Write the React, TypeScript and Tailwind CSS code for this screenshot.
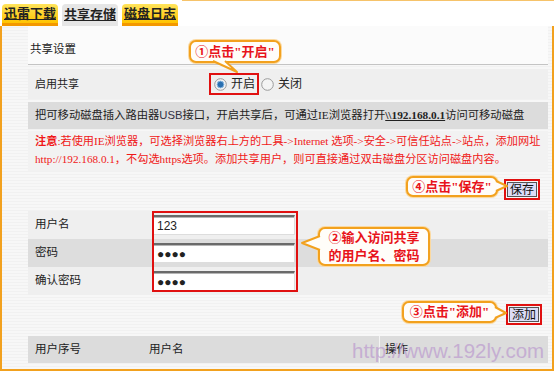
import type { ReactNode } from 'react';

// Router "共享存储" page with tutorial callouts drawn on top

const ORANGE = '#f2a11e';

function Tab({ label, active }: { label: string; active?: boolean }) {
  return (
    <div
      className={
        'flex h-[22px] w-[56px] items-center justify-center rounded-t-[4px] text-[13px] font-bold underline ' +
        (active
          ? 'bg-[#e6e6e6] text-[#222]'
          : 'border-b-[3px] border-[#f39800] bg-[linear-gradient(#ffe45c,#ffc400)] text-[#222]')
      }
    >
      {label}
    </div>
  );
}

function Radio({ checked }: { checked?: boolean }) {
  return (
    <svg width="13" height="13" viewBox="0 0 13 13" className="shrink-0">
      <circle cx="6.5" cy="6.5" r="5.8" fill="#f4f4f4" stroke="#9a9a9a" strokeWidth="1" />
      {checked && <circle cx="6.5" cy="6.5" r="3.4" fill="#2a6fb0" stroke="#8bb8e0" strokeWidth="1" />}
    </svg>
  );
}

function Callout({
  className,
  children,
}: {
  className: string;
  children: ReactNode;
}) {
  return (
    <div
      className={
        'absolute flex items-center justify-center rounded-[7px] border-2 border-[#f2a11e] bg-[#fffdf9] text-[13px] font-bold leading-[18px] text-[#e8141b] shadow-[0_0_0_1px_#fbd9a0] ' +
        className
      }
    >
      {children}
    </div>
  );
}

function Tail({ className, fill, line, w, h }: { className: string; fill: string; line: string; w: number; h: number }) {
  return (
    <svg width={w} height={h} className={'absolute ' + className}>
      <path d={fill} fill="#fffdf9" />
      <path d={line} fill="none" stroke={ORANGE} strokeWidth="2" strokeLinejoin="round" />
    </svg>
  );
}

function SmallButton({ label }: { label: string }) {
  return (
    <div className="border-2 border-[#e01010] p-[1px]">
      <div className="flex h-[15px] items-center border border-[#555] bg-[#dcdcf6] px-[2px] text-[12px] leading-none text-[#111]">
        {label}
      </div>
    </div>
  );
}

function TextBox({ value }: { value: string }) {
  return (
    <div className="flex h-[20px] w-[142px] items-center border-t-2 border-l border-[#6a6a6a] border-r border-b border-r-[#ddd] border-b-[#ddd] bg-white pl-[3px] font-['Liberation_Sans',sans-serif] text-[12px] text-[#222] shadow-[inset_0_1px_0_#b5b5b5]">
      {value}
    </div>
  );
}

export default function App() {
  return (
    <div className="relative h-[371px] w-[554px] overflow-hidden bg-white font-['Liberation_Serif','Noto_Sans_CJK_SC',serif] text-[11px] text-[#222]">
      {/* tabs */}
      <div className="flex h-[26px] items-end gap-[4px] pl-[2px]">
        <Tab label="迅雷下载" />
        <Tab label="共享存储" active />
        <Tab label="磁盘日志" />
        <div className="h-[26px] flex-1 border-t border-[#f6c36a]" />
      </div>

      {/* panel */}
      <div className="h-[345px] border-b-2 border-l-2 border-r-2 border-[#f2a11e] bg-[repeating-linear-gradient(0deg,#f7f7f7_0px,#f7f7f7_2px,#f1f1f1_2px,#f1f1f1_3px)] pl-[26px] pr-[4px]">
        <div className="flex h-[39px] items-end border-b border-[#c4c4c4] bg-[#fbfbfb] pb-[6px] pl-[2px] text-[11.5px]">
          共享设置
        </div>

        <div className="mt-[4px] flex h-[30px] items-center bg-[#efefef] pl-[7px]">
          <span className="w-[174px]">启用共享</span>
          <div className="flex h-[22px] items-center gap-[4px] border-2 border-[#e01010] pl-[3px] pr-[2px]">
            <Radio checked />
            <span className="text-[12px]">开启</span>
          </div>
          <div className="ml-[2px] flex items-center gap-[4px]">
            <Radio />
            <span className="text-[12px]">关闭</span>
          </div>
        </div>

        <div className="mt-[3px] flex h-[27px] items-center bg-[#dcdcdc] pl-[7px] text-[11.3px]">
          把可移动磁盘插入路由器<span className="font-['Liberation_Sans',sans-serif] text-[#334]">USB</span>接口，开启共享后，可通过IE浏览器打开
          <span className="font-bold underline">\\192.168.0.1</span>访问可移动磁盘
        </div>

        <div className="mt-[2px] bg-[#f2f2f2] pb-[3px] pl-[7px] pt-[1px] text-[11.2px] leading-[18px] text-[#f01818]">
          <div>
            <span className="font-bold">注意</span>:若使用IE浏览器，可选择浏览器右上方的工具-&gt;Internet 选项-&gt;安全-&gt;可信任站点-&gt;站点，添加网址
          </div>
          <div>http://192.168.0.1，不勾选https选项。添加共享用户，则可直接通过双击磁盘分区访问磁盘内容。</div>
        </div>

        <div className="flex h-[40px] items-start justify-end pr-[8px] pt-[8px]">
          <SmallButton label="保存" />
        </div>

        <div className="flex h-[28px] items-center bg-[#efefef] pl-[7px] text-[11.5px]">
          <span className="w-[118px]">用户名</span>
          <TextBox value="123" />
        </div>
        <div className="flex h-[28px] items-center bg-[#dddddd] pl-[7px] text-[11.5px]">
          <span className="w-[118px]">密码</span>
          <TextBox value="●●●●" />
        </div>
        <div className="flex h-[28px] items-center bg-[#efefef] pl-[7px] text-[11.5px]">
          <span className="w-[118px]">确认密码</span>
          <TextBox value="●●●●" />
        </div>

        <div className="flex h-[41px] items-start justify-end pr-[6px] pt-[9px]">
          <SmallButton label="添加" />
        </div>

        <div className="flex h-[27px] items-center bg-[#dcdcdc] text-[11.5px]">
          <span className="w-[121px] pl-[7px]">用户序号</span>
          <span className="w-[230px]">用户名</span>
          <span className="h-full border-l border-[#f4f4f4] pl-[5px] leading-[27px]">操作</span>
        </div>
      </div>

      {/* annotation: red frame round the inputs */}
      <div className="absolute left-[152px] top-[211px] h-[81px] w-[146px] border-2 border-[#e01010]" />

      {/* callouts */}
      <Callout className="left-[189px] top-[40px] h-[23px] w-[92px]">①点击"开启"</Callout>
      <Tail className="left-[210px] top-[60px]" w={30} h={14} fill="M2 0 L27 12 L15 0 Z" line="M3 1 L27 12 L15 1" />

      <Callout className="left-[318px] top-[227px] h-[39px] w-[112px] flex-col">
        <span>②输入访问共享</span>
        <span>的用户名、密码</span>
      </Callout>
      <Tail className="left-[300px] top-[234px]" w={22} h={24} fill="M20 2 L2 9 L20 16 Z" line="M20 2 L2 9 L20 16" />

      <Callout className="left-[406px] top-[176px] h-[21px] w-[92px]">④点击"保存"</Callout>
      <Tail className="left-[495px] top-[180px]" w={14} h={14} fill="M0 1 L12 6 L0 11 Z" line="M1 1 L12 6 L1 11" />

      <Callout className="left-[402px] top-[301px] h-[22px] w-[95px]">③点击"添加"</Callout>
      <Tail className="left-[494px] top-[306px]" w={14} h={14} fill="M0 1 L12 7 L0 12 Z" line="M1 1 L12 7 L1 12" />

      {/* watermark */}
      <div className="pointer-events-none absolute left-[352px] top-[341px] font-['Liberation_Sans',sans-serif] text-[20.5px] leading-none text-[#b690cc] opacity-60">
        http://www.192ly.com
      </div>
    </div>
  );
}
